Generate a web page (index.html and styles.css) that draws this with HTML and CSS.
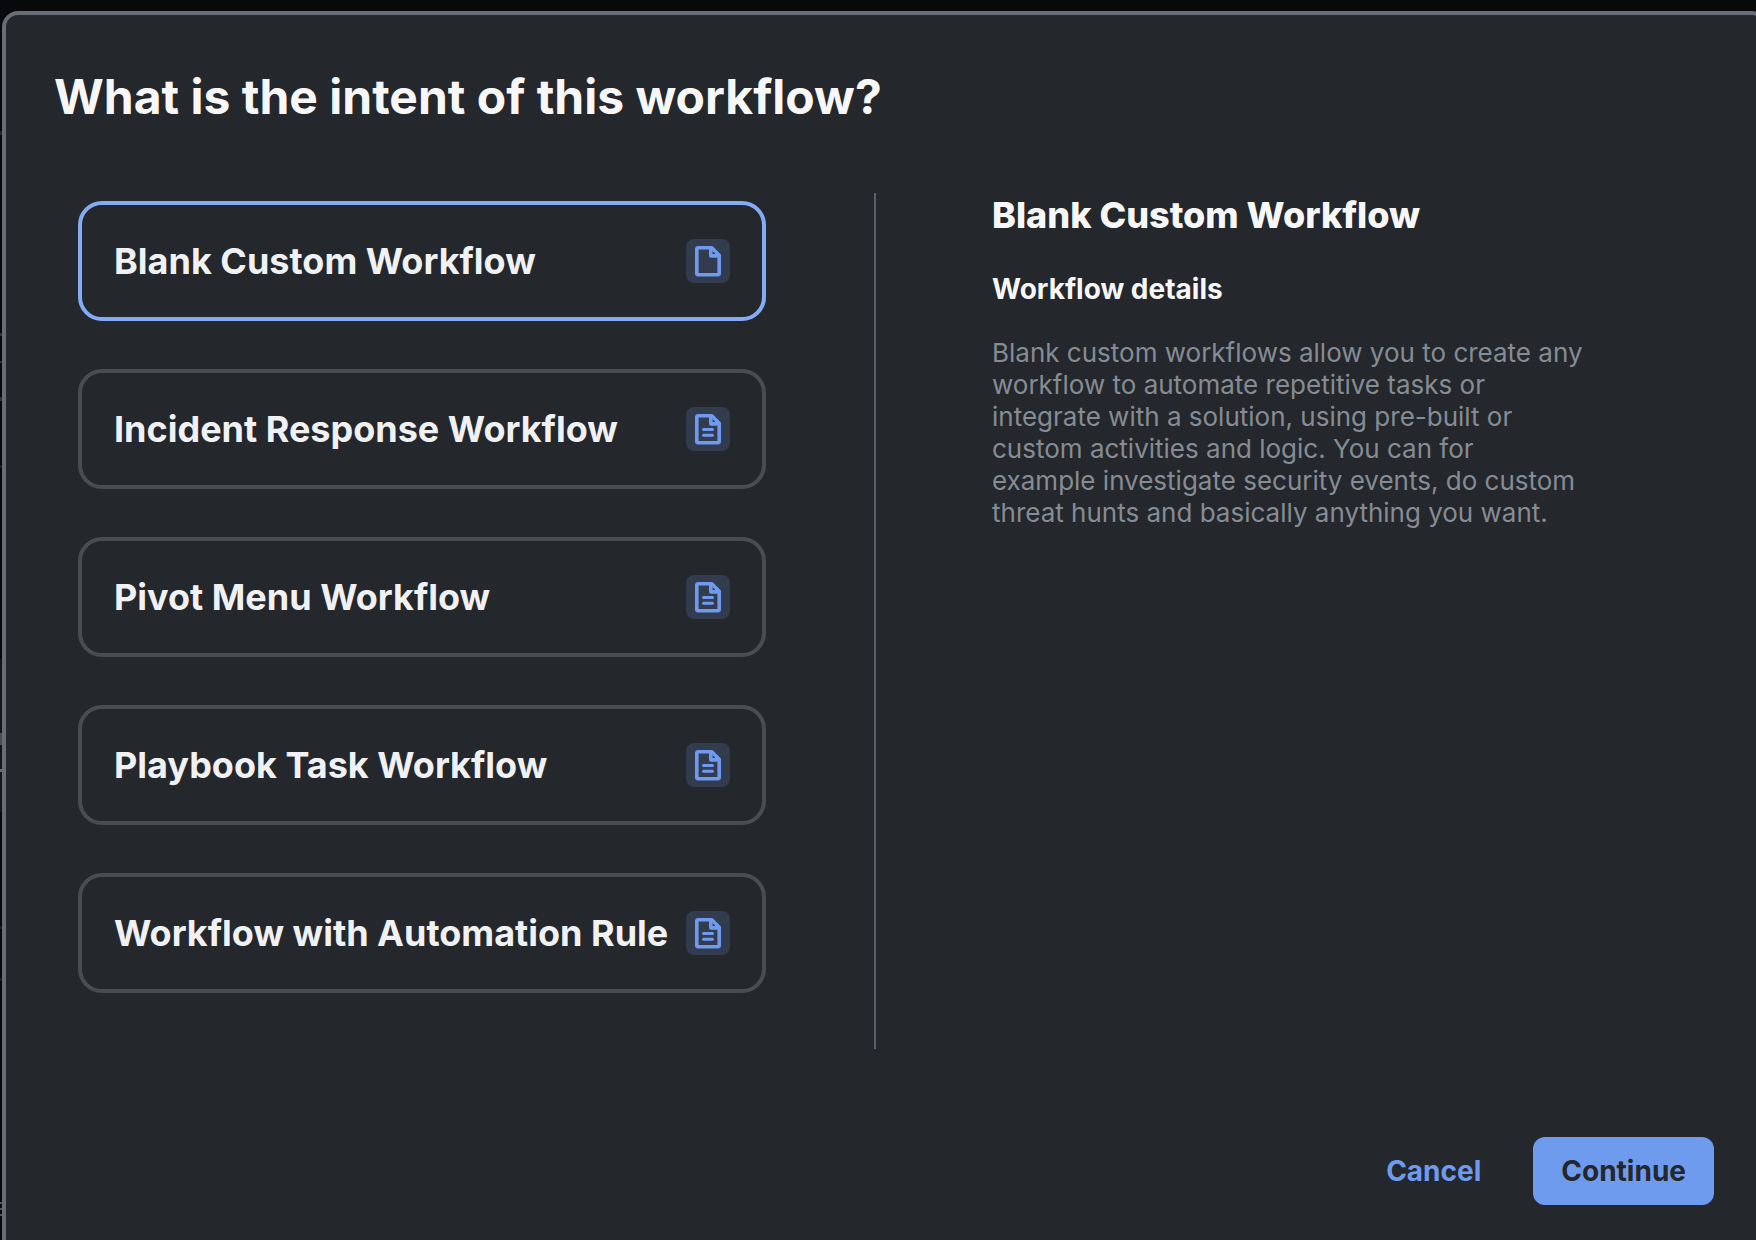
FILE: index.html
```html
<!DOCTYPE html>
<html lang="en">
<head>
<meta charset="utf-8">
<meta name="viewport" content="width=device-width, initial-scale=1">
<title>New workflow</title>
<link rel="stylesheet" href="styles.css">
</head>
<body>
<svg class="sprite" aria-hidden="true">
  <symbol id="page" viewBox="0 0 44 44">
    <path d="M12.300 8.800H25.800L33.200 16.200V34.300Q33.200 35.800 31.700 35.800H12.300Q10.800 35.800 10.800 34.300V10.300Q10.800 8.800 12.300 8.800Z" fill="none" stroke="currentColor" stroke-width="3.600" stroke-linejoin="round"/>
    <path d="M24.800 8.800V16.900H33.200" fill="none" stroke="currentColor" stroke-width="3.600" stroke-linejoin="round"/>
  </symbol>
  <symbol id="page-text" viewBox="0 0 44 44">
    <use href="#page"/>
    <path d="M17.500 22.500H26.500M17.500 28.200H26.500" fill="none" stroke="currentColor" stroke-width="3" stroke-linecap="round"/>
  </symbol>
</svg>
<main class="dialog" role="dialog" aria-labelledby="dialog-title">
  <h1 class="dialog-title" id="dialog-title">What is the intent of this workflow?</h1>
  <div class="dialog-body">
    <div class="options">
      <button class="option option-selected" type="button" aria-pressed="true">Blank Custom Workflow<svg class="option-icon" aria-hidden="true"><use href="#page"/></svg></button>
      <button class="option" type="button" aria-pressed="false">Incident Response Workflow<svg class="option-icon" aria-hidden="true"><use href="#page-text"/></svg></button>
      <button class="option" type="button" aria-pressed="false">Pivot Menu Workflow<svg class="option-icon" aria-hidden="true"><use href="#page-text"/></svg></button>
      <button class="option" type="button" aria-pressed="false">Playbook Task Workflow<svg class="option-icon" aria-hidden="true"><use href="#page-text"/></svg></button>
      <button class="option" type="button" aria-pressed="false">Workflow with Automation Rule<svg class="option-icon" aria-hidden="true"><use href="#page-text"/></svg></button>
    </div>
    <section class="details">
      <h2 class="details-title">Blank Custom Workflow</h2>
      <h3 class="details-subtitle">Workflow details</h3>
      <p class="details-text">Blank custom workflows allow you to create any workflow to automate repetitive tasks or integrate with a solution, using pre-built or custom activities and logic. You can for example investigate security events, do custom threat hunts and basically anything you want.</p>
    </section>
  </div>
  <footer class="actions">
    <button class="button button-text" type="button">Cancel</button>
    <button class="button button-primary" type="button">Continue</button>
  </footer>
</main>
</body>
</html>
```
FILE: styles.css
```css
* {
  box-sizing: border-box;
}

body {
  margin: 0;
  min-height: 100vh;
  display: flex;
  padding: 11px 0 0 2px;
  overflow: hidden;
  /* sliver of the dimmed page left of the dialog */
  background: #08090b linear-gradient(
    transparent 131px, #25272a 131px 135px,
    transparent 135px 333px, #303236 333px 336px,
    transparent 336px 361px, #303236 361px 363px,
    transparent 363px 397px, #303236 397px 401px,
    transparent 401px 465px, #1c1e20 465px 468px,
    transparent 468px 659px, #131516 659px 733px,
    #4c4e50 733px 745px, #131516 745px 769px,
    #6a6c6e 769px 772px, #131516 772px 812px,
    transparent 812px 926px, #1c1e20 926px 929px,
    transparent 929px 978px, #1c1e20 978px 981px,
    transparent 981px 1202px, #55585b 1202px 1204px,
    transparent 1204px 1208px, #55585b 1208px 1210px,
    transparent 1210px 1214px, #55585b 1214px 1216px,
    transparent 1216px) 0 0 / 2px 100% no-repeat;
  color: #f7f7f8;
  font-family: Inter, "Liberation Sans", sans-serif;
}

.sprite {
  display: none;
}

.dialog {
  flex: 1 0 auto;
  width: 100%;
  margin-right: -12px;
  display: flex;
  flex-direction: column;
  padding: 54px 50px 35px 48px;
  border: 4px solid #666d75;
  border-bottom: 0;
  border-radius: 16px 16px 0 0;
  background: #24272c;
}

.dialog-title {
  margin: 0 0 68px;
  font-size: 48px;
  line-height: 56px;
  font-weight: 700;
}

.dialog-body {
  display: grid;
  grid-template-columns: 822px 1fr;
}

.options {
  display: flex;
  flex-direction: column;
  gap: 48px;
  padding: 8px 108px 56px 24px;
  border-right: 2px solid #5b6067;
}

.option {
  display: flex;
  align-items: center;
  justify-content: space-between;
  height: 120px;
  padding: 0 32px;
  border: 4px solid #494c50;
  border-radius: 24px;
  background: transparent;
  color: #f0f1f3;
  font: 700 36px/44px Inter, "Liberation Sans", sans-serif;
  text-align: left;
  white-space: nowrap;
}

.option-selected {
  border-color: #85abf5;
}

.option-icon {
  flex: none;
  width: 44px;
  height: 44px;
  border-radius: 8px;
  background: #323c4e;
  color: #6f9bee;
}

.details {
  padding: 0 120px 0 116px;
}

.details-title {
  margin: 0 0 36px;
  font-size: 36px;
  line-height: 44px;
  font-weight: 800;
}

.details-subtitle {
  margin: 0 0 32px;
  font-size: 28px;
  line-height: 32px;
  font-weight: 700;
}

.details-text {
  max-width: 591px;
  margin: 0;
  color: #868c94;
  font-size: 26px;
  line-height: 32px;
}

.actions {
  display: flex;
  justify-content: flex-end;
  gap: 24px;
  margin-top: 88px;
}

.button {
  height: 68px;
  padding: 0 28px;
  border: 0;
  border-radius: 12px;
  background: transparent;
  color: #6f9bee;
  font: 700 28px/32px Inter, "Liberation Sans", sans-serif;
}

.button-primary {
  background: #6f9bee;
  color: #24272c;
}
```
